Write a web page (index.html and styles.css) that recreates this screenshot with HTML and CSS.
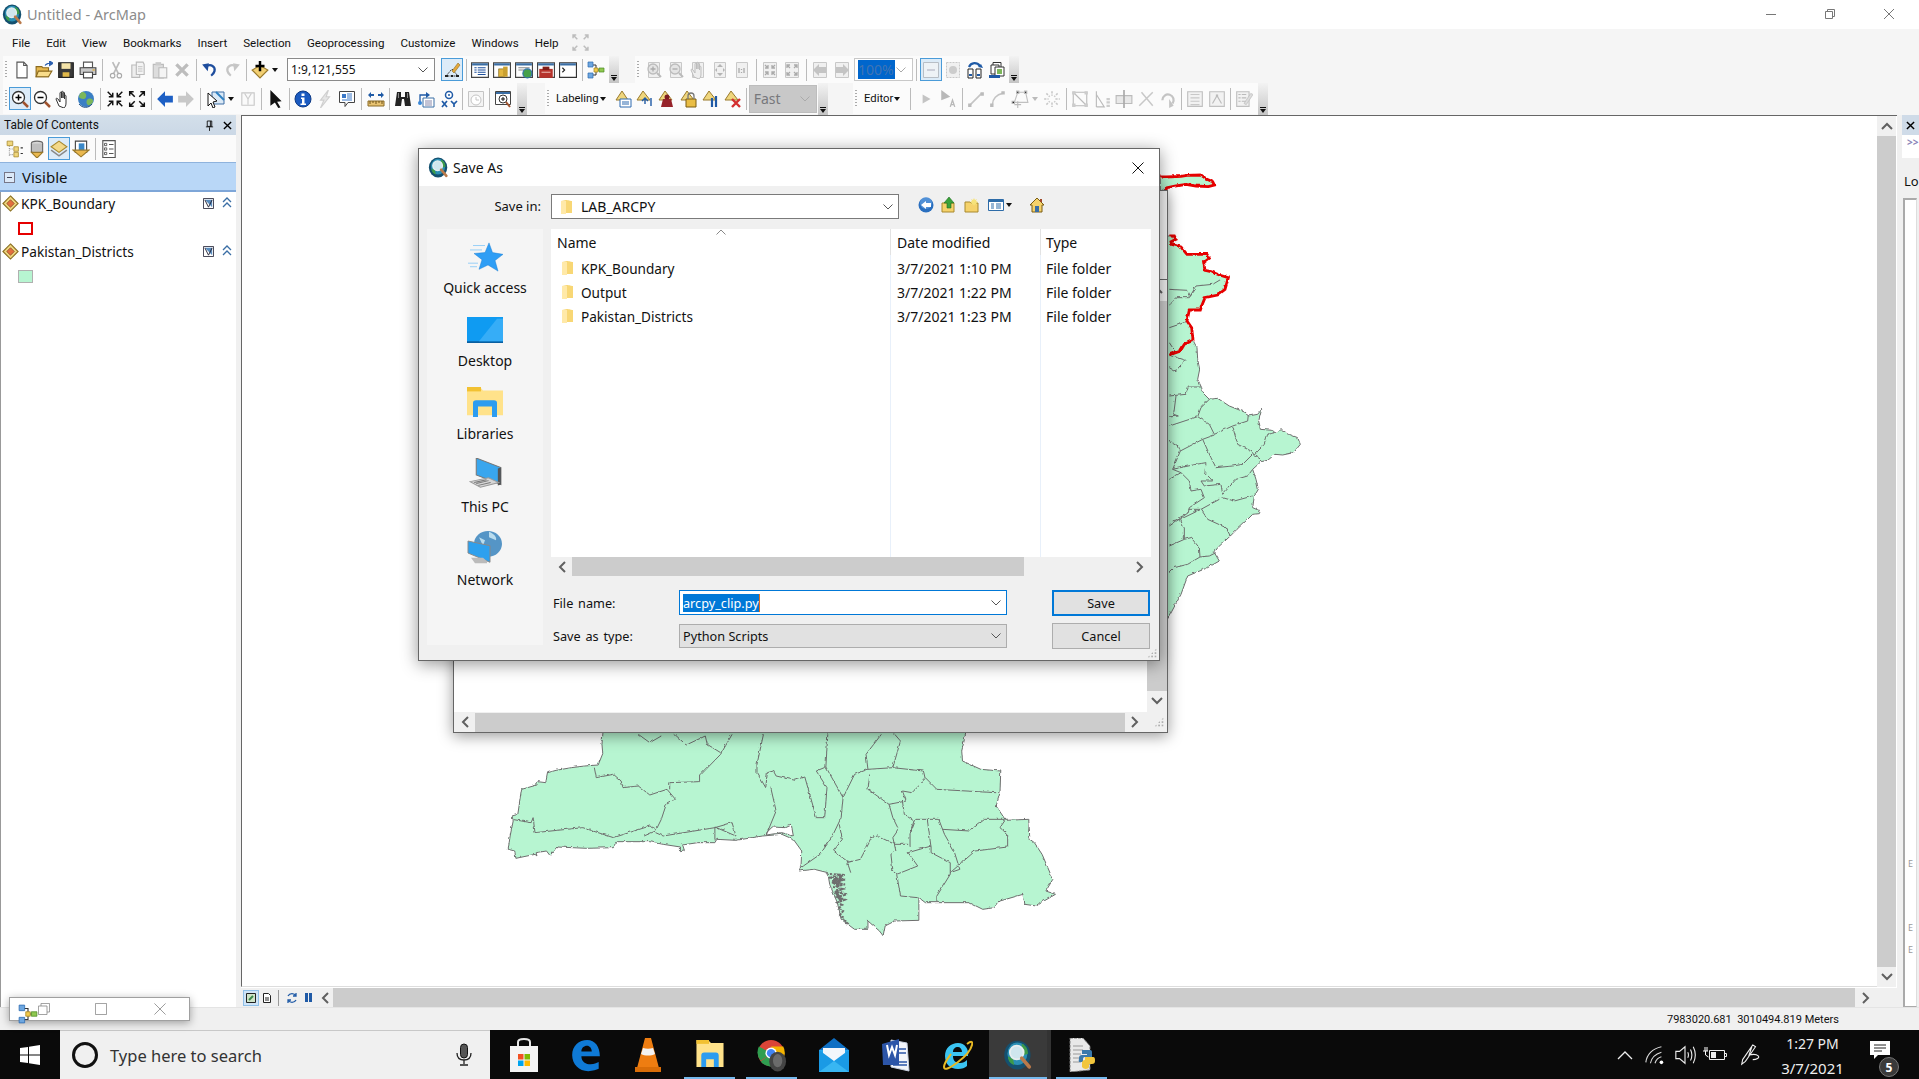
FILE: index.html
```html
<!DOCTYPE html>
<html lang="en">
<head>
<meta charset="utf-8">
<title>Untitled - ArcMap</title>
<link rel="stylesheet" href="styles.css">
</head>
<body>
<svg class="defs" aria-hidden="true">
<defs>
<filter id="jag" x="-5%" y="-5%" width="110%" height="110%"><feTurbulence type="turbulence" baseFrequency=".22" numOctaves="1" seed="4" result="n"/><feDisplacementMap in="SourceGraphic" in2="n" scale="2.500" xChannelSelector="R" yChannelSelector="G"/></filter>
<symbol id="arc" viewBox="0 0 24 24"><ellipse cx="11.500" cy="12" rx="10.500" ry="11.500" fill="#14506f"/><ellipse cx="11.500" cy="11" rx="8" ry="9" fill="#2a8fb5"/><path d="M15 3c3 1 5 4 5 8l-3 1-2-4zM4 13l4 2 1 5c-3-1-5-3-5-7z" fill="#3c9a4a"/><circle cx="11" cy="10" r="5.500" fill="#cfe6ee" stroke="#e7eef0" stroke-width="1.500"/><path d="M15 14.500l6 7" stroke="#b9794a" stroke-width="3" stroke-linecap="round"/></symbol>
<symbol id="new" viewBox="0 0 16 16"><path d="M3.500 1h6l3 3v11h-9z" fill="#fff" stroke="#555"/><path d="M9.500 1v3h3" fill="none" stroke="#555"/></symbol>
<symbol id="open" viewBox="0 0 16 16"><path d="M1 14V5h5l1 1h5v8z" fill="#e6b84f" stroke="#8b6a1e"/><path d="M1 14l2-5h12l-3 5z" fill="#f8dc8a" stroke="#8b6a1e"/><path d="M9 4c1-2 3-2 4-2M13 0v4l3-2z" stroke="#2a5fb0" fill="#2a5fb0"/></symbol>
<symbol id="save" viewBox="0 0 16 16"><path d="M1.500 1.500h13v13h-13z" fill="#3a3a3a" stroke="#222"/><path d="M4 2h8v5H4z" fill="#f4e3a8"/><path d="M5 10h6v4H5z" fill="#e0b84a"/></symbol>
<symbol id="print" viewBox="0 0 16 16"><path d="M4 1h8v5H4z" fill="#fff" stroke="#555"/><path d="M1 6h14v6H1z" fill="#c8c8c8" stroke="#444"/><path d="M4 10h8v5H4z" fill="#fff" stroke="#444"/><path d="M12 8h2" stroke="#d8a020"/></symbol>
<symbol id="cut" viewBox="0 0 16 16"><path d="M5 1l5 10M11 1L6 11" stroke="#bbb" stroke-width="1.500"/><circle cx="5" cy="13" r="2" fill="none" stroke="#aaa"/><circle cx="11" cy="13" r="2" fill="none" stroke="#aaa"/></symbol>
<symbol id="copy" viewBox="0 0 16 16"><path d="M2.500 3.500h7v11h-7z" fill="#eee" stroke="#bbb"/><path d="M6.500 1h6l1 2v9h-7z" fill="#f4f4f4" stroke="#bbb"/><path d="M8 5h4M8 7h4M8 9h4" stroke="#ccc"/></symbol>
<symbol id="paste" viewBox="0 0 16 16"><path d="M2 3h9v12H2z" fill="#ddd" stroke="#bbb"/><path d="M7 6h7v9H7z" fill="#f4f4f4" stroke="#bbb"/><path d="M4 1h5v3H4z" fill="#ccc"/></symbol>
<symbol id="del" viewBox="0 0 16 16"><path d="M3 3l10 10M13 3L3 13" stroke="#bdbdbd" stroke-width="3"/></symbol>
<symbol id="undo" viewBox="0 0 16 16"><path d="M4 5c5-3 9 0 8 4-.5 2-2 3-3 4" fill="none" stroke="#1f4e9e" stroke-width="2"/><path d="M1 3l6-1-1 7z" fill="#1f4e9e"/></symbol>
<symbol id="redo" viewBox="0 0 16 16"><path d="M12 5C7 2 3 5 4 9c.5 2 2 3 3 4" fill="none" stroke="#c6c6c6" stroke-width="2"/><path d="M15 3l-6-1 1 7z" fill="#c6c6c6"/></symbol>
<symbol id="add" viewBox="0 0 16 16"><path d="M8 4l7 4-7 7-7-7z" fill="#f2cf72" stroke="#9a7a2c"/><path d="M8 0v9M4 4.500h8" stroke="#000" stroke-width="2.200"/></symbol>
<symbol id="edit" viewBox="0 0 18 18"><path d="M3 15L9 8l6 7z" fill="none" stroke="#333" stroke-dasharray="2 1"/><path d="M2 14h3v2H2zM8 14h2v2H8zM13 14h3v2h-3z" fill="#222"/><path d="M9 10l6-8 2 2-6 8z" fill="#e5a93c" stroke="#8d6c22" stroke-width=".6"/></symbol>
<symbol id="win1" viewBox="0 0 16 16"><path d="M.5 1.500h15v13H.5z" fill="#fff" stroke="#444"/><path d="M1 2h14v2H1z" fill="#3a6ea5"/><path d="M3 6h2M3 8h2M3 10h2M6 6h7M6 8h7M6 10h7M6 12h7" stroke="#1e4f9b"/></symbol>
<symbol id="win2" viewBox="0 0 16 16"><path d="M.5 1.500h15v13H.5z" fill="#fff" stroke="#444"/><path d="M1 2h14v2H1z" fill="#3a6ea5"/><path d="M5 7h5v7H5z" fill="#e3b73f" stroke="#7f6520" stroke-width=".6"/><path d="M9 5h4v9H9z" fill="#caa030"/></symbol>
<symbol id="win3" viewBox="0 0 16 16"><path d="M.5 1.500h15v13H.5z" fill="#fff" stroke="#444"/><path d="M1 2h14v2H1z" fill="#3a6ea5"/><path d="M3 6h10M3 8h5" stroke="#888"/><circle cx="11" cy="11" r="4" fill="#46a04a" stroke="#2d6fa8"/></symbol>
<symbol id="win4" viewBox="0 0 16 16"><path d="M.5 1.500h15v13H.5z" fill="#fff" stroke="#444"/><path d="M1 2h14v2H1z" fill="#3a6ea5"/><path d="M2 7h12v8H2z" fill="#b6332c"/><path d="M5 5h6v3H5z" fill="#7f1d18"/><path d="M4 10h8" stroke="#e7b0a8"/></symbol>
<symbol id="win5" viewBox="0 0 16 16"><path d="M.5 1.500h15v13H.5z" fill="#fff" stroke="#333"/><path d="M1 2h14v2H1z" fill="#3a6ea5"/><path d="M3 6l2 2-2 2" fill="none" stroke="#222"/></symbol>
<symbol id="model" viewBox="0 0 18 18"><path d="M4 4h5v5M4 14h5V9h4" fill="none" stroke="#333"/><path d="M1 1h5v5H1zM1 12h5v5H1z" fill="#6ea7e0" stroke="#2d6bb0" stroke-width=".7"/><path d="M7 7h4v4H7z" fill="#f2c94c" stroke="#a8861d" stroke-width=".7"/><path d="M12 7h5v4h-5z" fill="#8fc84f" stroke="#4c8a22" stroke-width=".7"/></symbol>
<symbol id="zin" viewBox="0 0 18 18"><circle cx="7.500" cy="7.500" r="6" fill="#fff" stroke="#333" stroke-width="1.300"/><path d="M4.500 7.500h6M7.500 4.500v6" stroke="#000" stroke-width="1.500"/><path d="M12 12l5 5" stroke="#a0522d" stroke-width="2.500"/></symbol>
<symbol id="zout" viewBox="0 0 18 18"><circle cx="7.500" cy="7.500" r="6" fill="#fff" stroke="#333" stroke-width="1.300"/><path d="M4.500 7.500h6" stroke="#000" stroke-width="1.500"/><path d="M12 12l5 5" stroke="#a0522d" stroke-width="2.500"/></symbol>
<symbol id="hand" viewBox="0 0 18 18"><path d="M4 16L1 9c0-1 1-1 2 0l2 3V3c0-1 1.500-1 1.500 0v5-6c0-1 1.500-1 1.500 0v6-5c0-1 1.500-1 1.500 0v6-3c0-1 1.500-1 1.500 0v7c0 3-1 4-2 5z" fill="#fff" stroke="#333"/></symbol>
<symbol id="globe" viewBox="0 0 18 18"><circle cx="9" cy="9" r="8" fill="#3b7fc4"/><path d="M5 2c3 0 5 2 4 5S5 9 3 8 3 3 5 2zM11 9c3-1 5 0 5 2s-3 5-5 4-2-5 0-6z" fill="#7cb75a"/><path d="M2 14a8 8 0 0 0 13 0" fill="none" stroke="#204f86"/></symbol>
<symbol id="fin" viewBox="0 0 16 16"><path d="M1.500 1.500l4 4M6 2.500V6H2.500M14.500 1.500l-4 4M10 2.500V6h3.500M1.500 14.500l4-4M6 13.500V10H2.500M14.500 14.500l-4-4M10 13.500V10h3.500" fill="none" stroke="#111" stroke-width="1.300"/></symbol>
<symbol id="fout" viewBox="0 0 16 16"><path d="M6 6L2 2M1.500 5V1.500H5M10 6l4-4M14.500 5V1.500H11M6 10l-4 4M1.500 11v3.500H5M10 10l4 4M14.500 11v3.500H11" fill="none" stroke="#111" stroke-width="1.300"/></symbol>
<symbol id="back" viewBox="0 0 16 16"><path d="M1 8l7-7v4h7v6H8v4z" fill="#1d5fc4"/></symbol>
<symbol id="fwd" viewBox="0 0 16 16"><path d="M15 8L8 1v4H1v6h7v4z" fill="#c8c8c8"/></symbol>
<symbol id="selt" viewBox="0 0 18 18"><path d="M5 2h12v12H5z" fill="#dbe9f6" stroke="#3f6fa5"/><path d="M9 2l8 8" stroke="#2f80c2" stroke-width="2"/><path d="M1 3l9 8-4 1 2 5-2 1-2-5-3 3z" fill="#fff" stroke="#111"/></symbol>
<symbol id="clr" viewBox="0 0 16 16"><path d="M2.500 2.500h11v11h-11z" fill="#fafafa" stroke="#c8c8c8"/><path d="M5 3l3 5 3-5M8 8v5" fill="none" stroke="#ccc"/></symbol>
<symbol id="ptr" viewBox="0 0 16 16"><path d="M3 0l10 10-4 .5 3 5-2 .5-3-5-4 3z" fill="#111"/></symbol>
<symbol id="info" viewBox="0 0 18 18"><circle cx="9" cy="9" r="8" fill="#1a5ac0" stroke="#0e3a85"/><path d="M7.500 3.500h3v2.500h-3zM7 7.500h3.500v6H12V15H6.500v-1.500H8V9H7z" fill="#fff"/></symbol>
<symbol id="bolt" viewBox="0 0 16 16"><path d="M11 0L4 9h3l-3 7 8-10H9z" fill="#e6e6e6" stroke="#cfcfcf"/></symbol>
<symbol id="html" viewBox="0 0 18 18"><path d="M1.500 1.500h15v11H10l-3 4v-4H1.500z" fill="#fff" stroke="#444"/><path d="M4 4h4v4H4z" fill="#3a78c8"/><path d="M9 4h5M9 6h5M9 8h5M4 10h10" stroke="#3a78c8"/></symbol>
<symbol id="meas" viewBox="0 0 18 18"><path d="M1 11h16v5H1z" fill="#e7c271" stroke="#8a6a26"/><path d="M3 11v3M6 11v2M9 11v3M12 11v2M15 11v3" stroke="#6e521a"/><path d="M1 5l3-3v2h3v2H4v2zM17 5l-3-3v2h-3v2h3v2z" fill="#1f5aa6"/></symbol>
<symbol id="bino" viewBox="0 0 18 18"><path d="M3 2h4v5h4V2h4l2 14h-6l-1-7H8L7 16H1z" fill="#222"/><path d="M4 3h1v5H4zM13 3h1v5h-1z" fill="#888"/></symbol>
<symbol id="route" viewBox="0 0 18 18"><path d="M6 8h11v9H6z" fill="#fff" stroke="#3a6ea5"/><path d="M8 11h7M8 13h7M8 15h7" stroke="#88a"/><path d="M3 12V5h7" fill="none" stroke="#1f5aa6" stroke-width="1.300"/><path d="M9 2l4 3-4 3z" fill="#1f5aa6"/><circle cx="3" cy="13" r="2" fill="#3a88d8"/></symbol>
<symbol id="xy" viewBox="0 0 18 18"><circle cx="9" cy="5" r="3.500" fill="#fff" stroke="#1f5aa6" stroke-width="1.500"/><circle cx="9" cy="5" r="1" fill="#1f5aa6"/><path d="M2 11l5 6M7 11l-5 6M11 11l3 3 3-3M14 14v3" fill="none" stroke="#1f5aa6" stroke-width="1.700"/></symbol>
<symbol id="time" viewBox="0 0 18 18"><path d="M1.500 1.500h15v15h-15z" fill="#f4f4f4" stroke="#c4c4c4"/><circle cx="9" cy="10" r="5" fill="#fff" stroke="#c4c4c4"/><path d="M9 7v3h3" fill="none" stroke="#c4c4c4"/></symbol>
<symbol id="mag" viewBox="0 0 18 18"><path d="M1.500 1.500h15v13h-15z" fill="#fff" stroke="#444"/><path d="M2 2h14v2H2z" fill="#3a6ea5"/><circle cx="9" cy="9" r="4" fill="#fff" stroke="#333"/><path d="M7 9h4M9 7v4" stroke="#111"/><path d="M12 12l4 5" stroke="#a0522d" stroke-width="2"/></symbol>
<symbol id="lab" viewBox="0 0 18 18"><path d="M8 1l6 9H2z" fill="#efd67d" stroke="#9a7a2c"/><path d="M6 9h11v8H6z" fill="#fff" stroke="#2f6ab0"/><path d="M8 12h7M8 14h7" stroke="#2f6ab0"/></symbol>
<symbol id="lab2" viewBox="0 0 18 18"><path d="M7 1l7 9H1z" fill="#efd67d" stroke="#9a7a2c"/><path d="M9 14V8m-3 3l3-3 3 3M15 8v8" fill="none" stroke="#1f5aa6" stroke-width="1.400"/></symbol>
<symbol id="lab3" viewBox="0 0 18 18"><path d="M7 1l7 9H1z" fill="#efd67d" stroke="#9a7a2c"/><path d="M5 9h8l2 8H3z" fill="#96232a"/><circle cx="9" cy="7" r="2.500" fill="#7e1b21"/></symbol>
<symbol id="lab4" viewBox="0 0 18 18"><path d="M7 1l7 9H1z" fill="#efd67d" stroke="#9a7a2c"/><path d="M6 9h10v8H6z" fill="#e9bd45" stroke="#7a5d12"/><path d="M8 9V6a3 3 0 0 1 6 0v3" fill="none" stroke="#777" stroke-width="1.300"/></symbol>
<symbol id="lab5" viewBox="0 0 18 18"><path d="M7 1l7 9H1z" fill="#efd67d" stroke="#9a7a2c"/><path d="M10 8v9M14 6v11" stroke="#1f5aa6" stroke-width="2.200"/></symbol>
<symbol id="lab6" viewBox="0 0 18 18"><path d="M7 1l7 9H1z" fill="#efd67d" stroke="#9a7a2c"/><path d="M8 9l8 8M16 9l-8 8" stroke="#d32f2f" stroke-width="2.400"/></symbol>
<symbol id="dz" viewBox="0 0 18 18"><path d="M3.500 1.500h11v15h-11z" fill="#f0f0f0" stroke="#c8c8c8"/><circle cx="8" cy="8" r="5" fill="#e4e4e4" stroke="#bcbcbc" stroke-width="1.300"/><path d="M5.500 8h5M8 5.500v5" stroke="#aaa" stroke-width="1.300"/><path d="M12 12l4 4" stroke="#bbb" stroke-width="2"/></symbol>
<symbol id="dzo" viewBox="0 0 18 18"><path d="M3.500 1.500h11v15h-11z" fill="#f0f0f0" stroke="#c8c8c8"/><circle cx="8" cy="8" r="5" fill="#e4e4e4" stroke="#bcbcbc" stroke-width="1.300"/><path d="M5.500 8h5" stroke="#aaa" stroke-width="1.300"/><path d="M12 12l4 4" stroke="#bbb" stroke-width="2"/></symbol>
<symbol id="dh" viewBox="0 0 18 18"><path d="M3.500 1.500h11v15h-11z" fill="#f0f0f0" stroke="#c8c8c8"/><path d="M5 16L2 9c0-1 1-1 2 0l2 3V3c0-1 1.500-1 1.500 0v5-6c0-1 1.500-1 1.500 0v6-5c0-1 1.500-1 1.500 0v6-3c0-1 1.500-1 1.500 0v7c0 3-1 4-2 5z" fill="#eee" stroke="#bdbdbd"/></symbol>
<symbol id="dfit" viewBox="0 0 18 18"><path d="M3.500 1.500h11v15h-11z" fill="#f0f0f0" stroke="#c8c8c8"/><path d="M9 3l3 3H6zM9 15l-3-3h6zM4 9l2-2v4zM14 9l-2-2v4z" fill="#b4b4b4"/></symbol>
<symbol id="d11" viewBox="0 0 18 18"><path d="M3.500 1.500h11v15h-11z" fill="#f0f0f0" stroke="#c8c8c8"/><path d="M6 7v5M8.500 8v1M8.500 11v1M11 7v5" stroke="#aaa" stroke-width="1.300"/></symbol>
<symbol id="dfi" viewBox="0 0 18 18"><path d="M2.500 1.500h13v15h-13z" fill="#f0f0f0" stroke="#c8c8c8"/><path d="M4 4l3 3M7 4v3H4M14 4l-3 3M11 4v3h3M4 14l3-3M7 14v-3H4M14 14l-3-3M11 14v-3h3" fill="none" stroke="#aaa" stroke-width="1.300"/></symbol>
<symbol id="dfo" viewBox="0 0 18 18"><path d="M2.500 1.500h13v15h-13z" fill="#f0f0f0" stroke="#c8c8c8"/><path d="M7 7L4 4M4 7V4h3M11 7l3-3M14 7V4h-3M7 11l-3 3M4 11v3h3M11 11l3 3M14 11v3h-3" fill="none" stroke="#aaa" stroke-width="1.300"/></symbol>
<symbol id="dbk" viewBox="0 0 18 18"><path d="M2.500 1.500h13v15h-13z" fill="#f0f0f0" stroke="#c8c8c8"/><path d="M2 9l6-6v3h7v6H8v3z" fill="#c4c4c4"/></symbol>
<symbol id="dfw" viewBox="0 0 18 18"><path d="M2.500 1.500h13v15h-13z" fill="#f0f0f0" stroke="#c8c8c8"/><path d="M16 9l-6-6v3H3v6h7v3z" fill="#c4c4c4"/></symbol>
<symbol id="pgv" viewBox="0 0 18 18"><path d="M1.500 1.500h15v15h-15z" fill="#eef2f6" stroke="#b8bec6"/><path d="M5 9h8" stroke="#aab"/></symbol>
<symbol id="pgd" viewBox="0 0 18 18"><path d="M2.500 1.500h13v15h-13z" fill="#f0f0f0" stroke="#c8c8c8" stroke-dasharray="2 1"/><circle cx="9" cy="9" r="4" fill="#ccc"/></symbol>
<symbol id="chg" viewBox="0 0 18 18"><path d="M2 8h5v9H2zM10 8h5v9h-5z" fill="#fff" stroke="#222"/><path d="M3 14h3M11 14h3" stroke="#1f5aa6" stroke-width="2"/><path d="M3 6c2-5 8-5 11-1" fill="none" stroke="#1f5aa6" stroke-width="2.200"/><path d="M17 7l-5-1 3-3z" fill="#1f5aa6"/></symbol>
<symbol id="lay" viewBox="0 0 18 18"><path d="M5 1.500h8v9H5z" fill="#fff" stroke="#333"/><path d="M3 4h8v9H3z" fill="#fff" stroke="#333"/><path d="M7 6h9v9H7z" fill="#fff" stroke="#333"/><path d="M9 8h5v5H9z" fill="#7cb75a"/><path d="M1 14h11v3H1z" fill="#1f5aa6"/></symbol>
<symbol id="e1" viewBox="0 0 16 16"><path d="M5 4l7 4-7 4z" fill="#c4c4c4"/></symbol>
<symbol id="e2" viewBox="0 0 16 16"><path d="M2 0l8 6-8 3z" fill="#b8b8b8"/><path d="M10 15l2-6 2 6M11 13h2" fill="none" stroke="#b8b8b8" stroke-width="1.200"/></symbol>
<symbol id="e3" viewBox="0 0 16 16"><path d="M3 13L13 3" stroke="#c4c4c4" stroke-width="1.400"/><path d="M1 12h3v3H1zM12 2h3v3h-3z" fill="#bbb"/></symbol>
<symbol id="e4" viewBox="0 0 16 16"><path d="M3 13c0-5 4-9 9-10" fill="none" stroke="#c4c4c4" stroke-width="1.400"/><path d="M1 12h3v3H1zM11 1h3v3h-3z" fill="#bbb"/></symbol>
<symbol id="e5" viewBox="0 0 16 16"><path d="M3 11L6 2h7l2 9z" fill="none" stroke="#c0c0c0"/><path d="M5 1h2v2H5zM12 1h2v2h-2zM1 10h2v2H1zM6 10v6M3 13h6" stroke="#bbb"/></symbol>
<symbol id="e6" viewBox="0 0 16 16"><path d="M8 1v4M8 11v4M1 8h4M11 8h4M3 3l3 3M13 3l-3 3M3 13l3-3M13 13l-3-3" stroke="#c8c8c8" stroke-width="1.400" stroke-dasharray="2 1"/></symbol>
<symbol id="e7" viewBox="0 0 16 16"><path d="M2 2h12v12H2zM2 2l12 12" fill="none" stroke="#bbb"/><path d="M1 1h3v3H1zM12 1h3v3h-3zM1 12h3v3H1zM12 12h3v3h-3z" fill="#ccc"/></symbol>
<symbol id="e8" viewBox="0 0 16 16"><path d="M3 1v14M3 4l7 11H3" fill="none" stroke="#bbb"/><path d="M12 8h3M12 11h3M12 14h3" stroke="#ccc" stroke-width="2"/></symbol>
<symbol id="e9" viewBox="0 0 16 16"><path d="M1 5h14v7H1z" fill="#e8e8e8" stroke="#bbb"/><path d="M8 0v16" stroke="#aaa" stroke-width="1.500"/></symbol>
<symbol id="e10" viewBox="0 0 16 16"><path d="M2 14L14 2M4 2l10 12" stroke="#c8c8c8" stroke-width="1.300"/></symbol>
<symbol id="e11" viewBox="0 0 16 16"><path d="M3 9a5 5 0 1 1 9 3" fill="none" stroke="#c4c4c4" stroke-width="2"/><path d="M9 8v8l4-2z" fill="#c4c4c4"/></symbol>
<symbol id="e12" viewBox="0 0 16 16"><path d="M1.500 1.500h13v13h-13z" fill="#f2f2f2" stroke="#c0c0c0"/><path d="M4 4h8M4 7h8M4 10h8M4 13h8" stroke="#c8c8c8"/></symbol>
<symbol id="e13" viewBox="0 0 16 16"><path d="M1.500 1.500h13v13h-13z" fill="#f2f2f2" stroke="#c0c0c0"/><path d="M4 12l4-7 4 7" fill="none" stroke="#bbb"/><path d="M7 4h2v2H7z" fill="#bbb"/></symbol>
<symbol id="e14" viewBox="0 0 16 16"><path d="M1.500 1.500h11v13h-11z" fill="#f2f2f2" stroke="#c0c0c0"/><path d="M3 4h2M3 7h2M3 10h2M6 4h4M6 7h4M6 10h4" stroke="#bbb"/><path d="M8 12l6-9 2 1-6 9z" fill="#ddd" stroke="#bbb" stroke-width=".6"/></symbol>
<symbol id="tc1" viewBox="0 0 16 16"><path d="M3 3v11M3 8h8M3 13h8" stroke="#999" stroke-dasharray="1 1"/><path d="M1 1h5v4H1zM7 6h4v4H7zM7 11h4v4H7z" fill="#efd67d" stroke="#a88a2e" stroke-width=".7"/><path d="M13 7h2M13 12h2" stroke="#333"/></symbol>
<symbol id="tc2" viewBox="0 0 16 16"><ellipse cx="8" cy="3" rx="5" ry="2" fill="#d8d8d8" stroke="#666"/><path d="M3 3v7c0 2 10 2 10 0V3" fill="#bfbfbf" stroke="#666"/><path d="M3 11h10l-5 5z" fill="#eab84f" stroke="#9a7a2c"/></symbol>
<symbol id="tc3" viewBox="0 0 16 16"><path d="M8 1l7 5-7 5-7-5z" fill="#f3d98a" stroke="#a8892e"/><path d="M1 9l7 5 7-5" fill="none" stroke="#888" stroke-width="1.300"/></symbol>
<symbol id="tc4" viewBox="0 0 16 16"><path d="M3 1h10v10H3z" fill="#fff" stroke="#444"/><path d="M6 3h5v6H6z" fill="#3a88c8"/><path d="M1 9h14l-7 6z" fill="#eab84f" stroke="#9a7a2c"/></symbol>
<symbol id="tc5" viewBox="0 0 16 16"><path d="M2.500.5h11v15h-11z" fill="#fff" stroke="#555"/><path d="M4 3h2v2H4zM4 7h2v2H4zM4 11h2v2H4z" fill="none" stroke="#555" stroke-width=".8"/><path d="M8 4h4M8 8h4M8 12h4" stroke="#555"/></symbol>
<symbol id="lyr" viewBox="0 0 18 18"><path d="M9 1l8 8-8 8-8-8z" fill="#efd67d" stroke="#8a6f22" stroke-width="1.200"/><path d="M9 5l4 4-4 4-4-4z" fill="#e3703e" stroke="#7a3d24" stroke-width=".7"/></symbol>
<symbol id="chk" viewBox="0 0 12 12"><path d="M.5.500h11v11H.5z" fill="#fff" stroke="#334"/><path d="M2 2l8 8V2z" fill="#5a8dbf"/><path d="M2 2l4 8 4-8" fill="none" stroke="#223"/></symbol>
<symbol id="upc" viewBox="0 0 10 12"><path d="M1 5l4-4 4 4M1 10l4-4 4 4" fill="none" stroke="#3a6ea5" stroke-width="1.300"/></symbol>
<symbol id="fold" viewBox="0 0 14 16"><path d="M1 2l5-1c2 0 5 1 5 1v12H2l-1 1z" fill="#f8d775"/><path d="M1 2h5v13H1z" fill="#ffe9a8"/><path d="M6 2h6v12H6z" fill="#f8d775"/></symbol>
<symbol id="star" viewBox="0 0 36 34" preserveAspectRatio="none"><path d="M22 1l3.500 11L36 14l-8 7 3 12-10-7-9 5 3-11-8-7 11-1z" fill="#2f9ef5" stroke="#1a7fd4" stroke-width=".5"/><path d="M6 4h12M3 9h12M1 24h10M3 28h7" stroke="#93cdf6"/></symbol>
<symbol id="desk" viewBox="0 0 36 28" preserveAspectRatio="none"><path d="M0 0h36v28H0z" fill="#0f9bf2"/><path d="M0 26h36v2H0z" fill="#0a5fa0"/><path d="M12 26L30 2h6v24z" fill="#36adf7"/></symbol>
<symbol id="libs" viewBox="0 0 36 34" preserveAspectRatio="none"><path d="M0 0h13l3 4h20v28H0z" fill="#ffe28a"/><path d="M0 0h14v5H0z" fill="#f2c132"/><path d="M6 34V18c0-2 1-3 3-3h18c2 0 3 1 3 3v16h-5V22H11v12z" fill="#2c9cf0"/></symbol>
<symbol id="pc" viewBox="0 0 36 36" preserveAspectRatio="none"><path d="M9 0l24 10v18L9 18z" fill="#39a6ee" stroke="#777"/><path d="M30 11l3-1v18l-3 1z" fill="#555"/><path d="M3 25l18-4 10 5-18 5z" fill="#d6d6d6" stroke="#999"/><path d="M7 26l12-3M9 27l12-3M11 29l12-3" stroke="#777"/></symbol>
<symbol id="net" viewBox="0 0 36 38" preserveAspectRatio="none"><circle cx="21" cy="15" r="14" fill="#5595c6"/><path d="M22 2c5 2 8 6 7 9l-7-3zM12 8l6 3-2 6z" fill="#b9dcee"/><path d="M1 12l22 5v18L1 25z" fill="#2da0ee" stroke="#888"/><path d="M4 30h12l4 4v2H8z" fill="#bbb"/></symbol>
<symbol id="backb" viewBox="0 0 16 16"><circle cx="8" cy="8" r="7.500" fill="#2a6fbf"/><circle cx="8" cy="6" r="6" fill="#6da6e6" opacity=".6"/><path d="M3 8l5-4v2h5v4H8v2z" fill="#fff"/></symbol>
<symbol id="upb" viewBox="0 0 16 16"><path d="M1 15V6h12v9z" fill="#f5d26b" stroke="#a8892e"/><path d="M6 11V6H3l5-6 5 6h-3v5z" fill="#3aa23a" stroke="#1f6d1f" stroke-width=".6"/></symbol>
<symbol id="newb" viewBox="0 0 16 16"><path d="M1 15V5h5l1 1h7v9z" fill="#f5d26b" stroke="#a8892e"/><path d="M10 1l1 2 2-1-1 2 2 1-2 1 1 2-2-1-1 2-1-2-2 1 1-2-2-1 2-1-1-2 2 1z" fill="#f6e27a"/></symbol>
<symbol id="viewb" viewBox="0 0 16 16"><path d="M.5 2.500h15v11H.5z" fill="#fff" stroke="#2e6ca8"/><path d="M1 3h14v2H1z" fill="#2e6ca8"/><path d="M3 7h3M3 9h3M3 11h3M8 7h5M8 9h5M8 11h5" stroke="#2e6ca8"/></symbol>
<symbol id="home" viewBox="0 0 16 16"><path d="M8 1L1 8h2v7h10V8h2z" fill="#f5d26b" stroke="#7a5d12"/><path d="M6 9h4v6H6z" fill="#3a6ea5"/><path d="M11 2h2v3h-2z" fill="#a14a2a"/></symbol>
<symbol id="win" viewBox="0 0 20 20"><path d="M0 3l8-1v7.500H0zM9 1.800L20 0v9.500H9zM0 10.500h8V18l-8-1zM9 10.500h11V20L9 18.200z" fill="#fff"/></symbol>
<symbol id="mic" viewBox="0 0 16 24"><rect x="4.500" y="1" width="7" height="14" rx="3.500" fill="#555" stroke="#111"/><path d="M1 10c0 5 3 7 7 7s7-2 7-7M8 17v4M4 22h8" fill="none" stroke="#222" stroke-width="1.300"/></symbol>
<symbol id="store" viewBox="0 0 30 34"><path d="M1 8h28v26H1z" fill="#f4f4f4"/><path d="M9 8V4c0-4 12-4 12 0v4" fill="none" stroke="#e8e8e8" stroke-width="2"/><path d="M9 16h5.500v5.500H9z" fill="#f25022"/><path d="M15.500 16H21v5.500h-5.500z" fill="#7fba00"/><path d="M9 22.500h5.500V28H9z" fill="#00a4ef"/><path d="M15.500 22.500H21V28h-5.500z" fill="#ffb900"/></symbol>
<symbol id="edge" viewBox="0 0 26 28"><path d="M1 14C1 6 7 1 14 1c7 0 11 6 11 14H9c0 5 4 7 8 7 3 0 5-1 7-2v6c-2 1-5 2-9 2C7 28 1 22 1 14zM9 11h9c0-3-2-5-4-5-3 0-5 2-5 5z" fill="#0f7ad6" fill-rule="evenodd"/></symbol>
<symbol id="vlc" viewBox="0 0 26 34"><path d="M10 0h6l8 30H2z" fill="#ee7d11"/><path d="M8 10c3 1 7 1 10 0l2 6c-4 2-10 2-14 0z" fill="#f2f2f2"/><path d="M0 29h26v5H0z" fill="#d96d08"/></symbol>
<symbol id="exp" viewBox="0 0 28 30"><path d="M0 0h12l3 3h13v25H0z" fill="#ffe28a"/><path d="M0 0h13v4H0z" fill="#f2c132"/><path d="M5 28V16c0-2 1-3 3-3h12c2 0 3 1 3 3v12h-5v-8h-8v8z" fill="#2c9cf0"/></symbol>
<symbol id="chr" viewBox="0 0 32 36"><circle cx="15" cy="16" r="14" fill="#db4437"/><path d="M15 16L4 24a14 14 0 0 1-2-15z" fill="#2f9e4f"/><path d="M15 16L4 25a14 14 0 0 0 20 2z" fill="#2f9e4f"/><path d="M15 9h13a14 14 0 0 1-3 17z" fill="#f4b400"/><circle cx="15" cy="16" r="6" fill="#fff"/><circle cx="15" cy="16" r="4.500" fill="#4285f4"/><ellipse cx="22" cy="25" rx="9" ry="10.500" fill="#444"/><ellipse cx="22" cy="24" rx="5" ry="7" fill="#6b6b6b"/></symbol>
<symbol id="mail" viewBox="0 0 30 34"><path d="M0 12L15 0l15 12z" fill="#0e6fc4"/><path d="M0 12h30v22H0z" fill="#27a6ec"/><path d="M4 10h22v7l-11 7-11-7z" fill="#f2f6fb"/><path d="M0 12l15 11 15-11v22H0z" fill="#1a9ae5"/><path d="M0 34l15-11 15 11z" fill="#38b6f2"/></symbol>
<symbol id="word" viewBox="0 0 30 34"><path d="M10 2l16 3 2 28-18-4z" fill="#f3f5fa" stroke="#c6cede"/><path d="M1 6l17-5v26L2 27z" fill="#2c55a8"/><path d="M11 11h14M11 15h14M12 24h14M12 27h14" stroke="#2c55a8" stroke-width="1.500"/><path d="M6 7l2 10 3-8 3 8 2-10" fill="none" stroke="#fff" stroke-width="2"/></symbol>
<symbol id="ie" viewBox="0 0 30 34"><path d="M2 18c0-8 6-13 13-13 7 0 11 6 10 13H10c0 5 3 7 7 7 3 0 5-1 7-3v6c-2 2-5 3-9 3C7 31 2 26 2 18zM10 14h9c0-3-2-5-4-5-3 0-5 2-5 5z" fill="#3bc4f2" fill-rule="evenodd"/><path d="M24 6c4-3 6-3 5 1s-6 11-14 17S1 33 1 29s4-9 7-13" fill="none" stroke="#e8b923" stroke-width="2"/></symbol>
<symbol id="py" viewBox="0 0 28 34"><path d="M2 0h13l7 8v24l-20 2z" fill="#e9e9e9" stroke="#777" stroke-dasharray="3 1"/><path d="M5 8h10M5 12h10M5 16h8M5 20h8M5 24h8" stroke="#999"/><path d="M14 12h8c2 0 2 2 2 2v5h-7c-2 0-2 2-2 2v3h-3c-2 0-1-2-1-4s1-3 3-3h5v-1h-5z" fill="#3a79ac"/><path d="M17 19h8c2 0 2 2 2 4s-1 3-3 3h-3v3c0 2-5 3-7 0v-4c0-2 1-3 3-3z" fill="#f2c63c"/></symbol>
<symbol id="wifi" viewBox="0 0 24 24"><path d="M2 20C3 12 9 5 19 3M7 21c1-5 5-10 12-12M12 21c1-3 3-6 7-7" fill="none" stroke="#ddd" stroke-width="1.200"/><circle cx="19" cy="20" r="2" fill="#fff"/></symbol>
<symbol id="vol" viewBox="0 0 24 24"><path d="M2 8h4l6-5v18l-6-5H2z" fill="none" stroke="#eee" stroke-width="1.200"/><path d="M15 9c1 2 1 4 0 6M18 6c2 4 2 8 0 12M21 3c3 6 3 12 0 18" fill="none" stroke="#eee" stroke-width="1.200"/></symbol>
<symbol id="bat" viewBox="0 0 24 16"><path d="M6.500 3.500h15v9h-15zM21.500 6.500h2v3h-2z" fill="none" stroke="#eee"/><path d="M8 5h5v6H8z" fill="#eee"/><path d="M0 4h5M2 0v4M4 0v4M2.500 4v4l3 2" fill="none" stroke="#fff"/></symbol>
<symbol id="pen" viewBox="0 0 24 24"><path d="M15 1l3 2L7 19l-4 3 1-5zM14 3l-3 9c4-1 8-1 10 1s-2 4-6 4" fill="none" stroke="#eee" stroke-width="1.200"/></symbol>
</defs>
</svg>

<div class="app">
  <header class="titlebar">
    <svg class="arc-small"><use href="#arc"/></svg>
    <span class="title-text">Untitled - ArcMap</span>
    <div class="winbtns">
      <svg class="wb" viewBox="0 0 12 12"><path d="M1 6.500h10"/></svg>
      <svg class="wb" viewBox="0 0 12 12"><path d="M1.500 3.500h7v7h-7zM3.500 3.500v-2h7v7h-2"/></svg>
      <svg class="wb" viewBox="0 0 12 12"><path d="M1 1l10 10M11 1L1 11"/></svg>
    </div>
  </header>

  <nav class="menubar">
    <span class="mi">File</span><span class="mi">Edit</span><span class="mi">View</span><span class="mi">Bookmarks</span><span class="mi">Insert</span><span class="mi">Selection</span><span class="mi">Geoprocessing</span><span class="mi">Customize</span><span class="mi">Windows</span><span class="mi">Help</span>
    <svg class="expand" viewBox="0 0 16 16"><path d="M1 1l4 4M1 4V1h3M15 1l-4 4M15 4V1h-3M1 15l4-4M1 12v3h3M15 15l-4-4M15 12v3h-3"/></svg>
  </nav>

  <div class="tbrow">
    <div class="tb t-a"><span class="grip"></span>
      <span class="i"><svg><use href="#new"/></svg></span><span class="i"><svg><use href="#open"/></svg></span><span class="i"><svg><use href="#save"/></svg></span><span class="i"><svg><use href="#print"/></svg></span><span class="s"></span>
      <span class="i"><svg><use href="#cut"/></svg></span><span class="i"><svg><use href="#copy"/></svg></span><span class="i"><svg><use href="#paste"/></svg></span><span class="i"><svg><use href="#del"/></svg></span><span class="s"></span>
      <span class="i"><svg><use href="#undo"/></svg></span><span class="i"><svg><use href="#redo"/></svg></span><span class="s"></span>
      <span class="i"><svg><use href="#add"/></svg></span><span class="c"></span>
      <span class="combo c-scale">1:9,121,555<svg class="chev" viewBox="0 0 10 6"><path d="M.5.500L5 5l4.500-4.500"/></svg></span>
      <span class="i on"><svg><use href="#edit"/></svg></span><span class="s"></span>
      <span class="i"><svg><use href="#win1"/></svg></span><span class="i"><svg><use href="#win2"/></svg></span><span class="i"><svg><use href="#win3"/></svg></span><span class="i"><svg><use href="#win4"/></svg></span><span class="i"><svg><use href="#win5"/></svg></span><span class="s"></span>
      <span class="i"><svg><use href="#model"/></svg></span>
    </div><span class="endgrip"></span>
    <div class="tb t-b"><span class="grip"></span>
      <span class="i"><svg><use href="#dz"/></svg></span><span class="i"><svg><use href="#dzo"/></svg></span><span class="i"><svg><use href="#dh"/></svg></span><span class="i"><svg><use href="#dfit"/></svg></span><span class="i"><svg><use href="#d11"/></svg></span><span class="s"></span>
      <span class="i"><svg><use href="#dfi"/></svg></span><span class="i"><svg><use href="#dfo"/></svg></span><span class="s"></span>
      <span class="i"><svg><use href="#dbk"/></svg></span><span class="i"><svg><use href="#dfw"/></svg></span>
      <span class="combo c-zoom"><span class="sel-dim">100%</span><svg class="chev dim" viewBox="0 0 10 6"><path d="M.5.500L5 5l4.500-4.500"/></svg></span><span class="s s-7"></span>
      <span class="i on"><svg><use href="#pgv"/></svg></span><span class="i"><svg><use href="#pgd"/></svg></span><span class="i"><svg><use href="#chg"/></svg></span><span class="i"><svg><use href="#lay"/></svg></span>
    </div><span class="endgrip"></span>
  </div>

  <div class="tbrow r2">
    <div class="tb t-c"><span class="grip g-n"></span>
      <span class="i on"><svg><use href="#zin"/></svg></span><span class="i"><svg><use href="#zout"/></svg></span><span class="i"><svg><use href="#hand"/></svg></span><span class="i"><svg><use href="#globe"/></svg></span><span class="s s-7"></span>
      <span class="i"><svg><use href="#fin"/></svg></span><span class="i"><svg><use href="#fout"/></svg></span><span class="s"></span>
      <span class="i"><svg><use href="#back"/></svg></span><span class="i i-n"><svg><use href="#fwd"/></svg></span><span class="s s-9"></span>
      <span class="i"><svg><use href="#selt"/></svg></span><span class="c c-11"></span><span class="i i-n"><svg><use href="#clr"/></svg></span><span class="s s-7"></span>
      <span class="i"><svg><use href="#ptr"/></svg></span><span class="s s-n"></span>
      <span class="i"><svg><use href="#info"/></svg></span><span class="i"><svg><use href="#bolt"/></svg></span><span class="i"><svg><use href="#html"/></svg></span><span class="s s-7"></span>
      <span class="i"><svg><use href="#meas"/></svg></span><span class="s s-n"></span>
      <span class="i"><svg><use href="#bino"/></svg></span><span class="i i-w"><svg><use href="#route"/></svg></span><span class="i"><svg><use href="#xy"/></svg></span><span class="s s-n"></span>
      <span class="i"><svg><use href="#time"/></svg></span><span class="s s-n"></span>
      <span class="i"><svg><use href="#mag"/></svg></span>
    </div><span class="endgrip"></span>
    <div class="tb t-d"><span class="grip"></span>
      <span class="tb-text">Labeling</span><span class="c"></span>
      <span class="i"><svg><use href="#lab"/></svg></span><span class="i"><svg><use href="#lab2"/></svg></span><span class="i"><svg><use href="#lab3"/></svg></span><span class="i"><svg><use href="#lab4"/></svg></span><span class="i"><svg><use href="#lab5"/></svg></span><span class="i"><svg><use href="#lab6"/></svg></span><span class="s s-n"></span>
      <span class="combo c-fast">Fast<svg class="chev dim" viewBox="0 0 10 6"><path d="M.5.500L5 5l4.500-4.500"/></svg></span>
    </div><span class="endgrip"></span>
    <div class="tb t-e"><span class="grip"></span>
      <span class="tb-text">Editor</span><span class="c"></span><span class="s s-9"></span>
      <span class="i"><svg><use href="#e1"/></svg></span><span class="i"><svg><use href="#e2"/></svg></span><span class="s"></span>
      <span class="i"><svg><use href="#e3"/></svg></span><span class="i"><svg><use href="#e4"/></svg></span><span class="i"><svg><use href="#e5"/></svg></span><span class="c c-dim c-10"></span><span class="i"><svg><use href="#e6"/></svg></span><span class="s"></span>
      <span class="i"><svg><use href="#e7"/></svg></span><span class="i"><svg><use href="#e8"/></svg></span><span class="i"><svg><use href="#e9"/></svg></span><span class="i"><svg><use href="#e10"/></svg></span><span class="i"><svg><use href="#e11"/></svg></span><span class="s s-n"></span>
      <span class="i"><svg><use href="#e12"/></svg></span><span class="i"><svg><use href="#e13"/></svg></span><span class="s s-n"></span>
      <span class="i"><svg><use href="#e14"/></svg></span>
    </div><span class="endgrip"></span>
  </div>

  <main class="main">
    <aside class="toc">
      <div class="toc-head"><span>Table Of Contents</span>
        <svg class="toc-pin" viewBox="0 0 10 12"><path d="M2.500 1h5v6h-5zM1 7.500h8M5 8v4M6 1v6" /></svg>
        <svg class="toc-x" viewBox="0 0 10 10"><path d="M1 1l8 8M9 1L1 9"/></svg>
      </div>
      <div class="toc-tools">
        <span class="i"><svg><use href="#tc1"/></svg></span><span class="i"><svg><use href="#tc2"/></svg></span><span class="i on"><svg><use href="#tc3"/></svg></span><span class="i"><svg><use href="#tc4"/></svg></span><span class="s"></span><span class="i"><svg><use href="#tc5"/></svg></span>
      </div>
      <div class="toc-body">
        <div class="toc-frame"><span class="minus"></span><span class="fname">Visible</span></div>
        <div class="toc-layer"><svg class="lyr"><use href="#lyr"/></svg><span class="lname">KPK_Boundary</span><svg class="chk"><use href="#chk"/></svg><svg class="upc"><use href="#upc"/></svg></div>
        <div class="toc-sym"><span class="sw sw-red"></span></div>
        <div class="toc-layer"><svg class="lyr"><use href="#lyr"/></svg><span class="lname">Pakistan_Districts</span><svg class="chk"><use href="#chk"/></svg><svg class="upc"><use href="#upc"/></svg></div>
        <div class="toc-sym"><span class="sw sw-green"></span></div>
      </div>
    </aside>

    <section class="center">
      <div class="map-row">
        <div class="map">
          <svg class="map-svg" viewBox="242 116 1635 871">
            <g class="jag"><g transform="translate(1100 150) scale(.33333)">
              <path class="land" d="M178 78L240 76 258 73 300 72 318 85 335 92 340 102 322 107 285 105 255 100 225 105 198 110 178 125Z"/>
              <path class="land" d="M178 255L205 255 220 255 225 265 210 272 212 280 240 288 258 310 318 310 325 322 308 335 312 358 330 362 355 372 382 380 372 415 350 432 312 440 302 465 298 477 265 477 258 510 272 530 276 568 288 590 290 625 296 655 290 685 302 710 305 725 325 745 350 742 385 765 435 785 442 795 470 790 482 775 473 810 478 835 515 838 525 848 540 836 565 850 590 860 598 880 578 905 545 912 522 910 500 928 480 932 455 955 465 985 472 1015 460 1035 455 1070 478 1080 475 1088 455 1090 440 1105 408 1135 388 1155 350 1190 340 1205 355 1230 320 1250 260 1275 240 1330 205 1395 178 1440Z"/>
              <path class="bnd" d="M205 415L260 418 268 435 285 405 335 400 360 385M205 462L228 440 265 440 285 412M205 530L250 515 258 510M205 575L215 590 230 605M205 612L255 628 225 662 205 650M205 735L255 730 262 708 300 708M225 735L218 790 232 795 205 798M205 825L290 797 325 820 340 850 395 825 440 810 442 790M290 797L300 770 325 745M205 870L232 885 238 900 305 865 340 852M305 865L330 920 345 950 395 945 425 940 455 910 480 925M395 828L410 880 450 900 460 912 490 880 500 850 525 845M238 900L215 955 240 965 205 985M240 965L265 990 270 1020 300 1015 310 1040 265 1070 262 1085 205 1125M215 955L285 940 315 935 312 965 335 990 300 990 310 1005 360 1000 365 1030 405 985 440 975 455 955M365 1040L400 1050 455 1035M300 1075L355 1045M300 1075L320 1105 375 1130 388 1155M238 1105L250 1135 250 1165 205 1185M250 1165L270 1160 295 1190 297 1218 325 1215 345 1205M205 1265L220 1250 260 1240 297 1218M262 1075L300 1075M215 1110L238 1105 300 1075"/>
              <path class="red" d="M178 78L195 78 240 76 258 73 300 72 318 85 335 92 340 102 322 107 285 105 255 100 225 105 198 110 193 120M205 255L220 255 225 265 210 272 212 280 240 288 258 310 318 310 325 322 308 335 312 358 330 362 355 372 382 380 372 415 350 432 312 440 302 465 298 477 265 477 258 510 272 530 276 568 250 580 238 600 205 612"/>
            </g></g>
            <g class="jag"><g transform="translate(490 720) scale(.3827 .33333)">
              <path class="land" d="M295 0L290 70 292 98 280 132 245 135 210 140 170 148 148 155 143 185 122 182 120 192 80 205 70 280 55 285 58 300 50 345 45 385 62 390 65 412 115 400 120 405 118 395 145 390 155 405 175 378 250 382 320 380 330 362 415 362 450 370 495 378 495 392 505 390 500 372 540 365 585 365 590 355 640 358 710 345 760 340 790 355 812 390 810 435 805 450 845 445 880 455 885 490 905 545 915 595 950 625 985 625 985 600 1015 630 1025 645 1030 615 1055 600 1118 598 1118 530 1135 545 1165 545 1250 545 1285 565 1315 560 1330 540 1390 520 1395 550 1425 555 1445 540 1475 520 1450 510 1468 475 1440 400 1420 365 1408 355 1405 295 1345 298 1320 255 1330 215 1332 150 1280 145 1232 120 1230 90 1248 0Z"/>
              <path class="lagoon" d="M720 335L735 318 770 320 785 312 790 345 760 335 720 342Z"/>
              <path class="bnd" d="M270 140L275 170 320 160 340 180 345 200 385 195 415 222 460 205 482 235 458 250 445 295 430 330 400 345M55 295L105 305 110 290 115 335 240 320 320 350 415 315 428 322M467 185L545 182 545 165 600 100 630 40M467 185L467 205M480 40L510 72 560 45 565 70 600 95M385 40L415 65 445 45M430 335L450 345 585 320 630 305 640 345 585 318 585 358M712 40L695 130 695 155 718 200 722 155 738 150 745 165 795 178 820 168 850 290 872 290 878 200 850 150 875 138 880 40M875 138L920 230 915 290 890 350 860 400 810 440M730 195L745 270 720 340M920 230L950 160 985 145 980 100 1000 70 1020 40M985 145L1050 140 1130 150 1135 175 1100 215 1075 210 1085 240 1040 250 985 205 990 160M1050 140L1070 60 1055 40M1135 170L1165 205 1320 215M910 310L918 355 895 390 930 420 940 455M930 425L965 415 995 350 1010 345 1055 370 1090 370M1040 250L1050 290 1065 325 1050 350 1058 390 1045 400 1050 450 1060 460 1115 435 1090 395 1150 375M1060 460L1070 525 1115 530M1075 240L1080 280 1105 300 1095 340 1110 295 1140 295 1150 380 1150 395 1200 425 1200 460 1165 525 1165 545M1140 295L1170 295 1185 340 1210 390 1225 445 1200 455 1265 390 1350 378 1350 340 1330 320 1345 295 1290 295 1250 330 1180 325M1095 340L1095 380"/>
              <path class="blob" d="M875 458L925 462 885 470 925 476 890 484 925 490 895 498 920 504 900 512 930 520 905 528 925 536 905 545 918 552 908 562 920 570 912 582 925 598 935 612"/>
              <path class="blob2" d="M905 470L895 490M915 462L905 500M900 510L915 540"/>
            </g></g>
          </svg>
        </div>
        <div class="vscroll">
          <svg class="sarrow" viewBox="0 0 12 8"><path d="M1 7l5-5 5 5"/></svg>
          <div class="vtrack"></div>
          <svg class="sarrow" viewBox="0 0 12 8"><path d="M1 1l5 5 5-5"/></svg>
        </div>
      </div>
      <div class="hscroll">
        <span class="vb vb-on"><svg viewBox="0 0 10 10"><path d="M.5.500h9v9h-9z" fill="#cfe3c8" stroke="#222"/><path d="M3 7l4-4" stroke="#3a8a4a" stroke-width="2"/></svg></span>
        <span class="vb"><svg viewBox="0 0 10 10"><path d="M1.500.5h5l2 2v7h-7z" fill="#fff" stroke="#222"/><path d="M3 5h4M3 7h4" stroke="#222"/></svg></span>
        <span class="vsep"></span>
        <svg class="vg" viewBox="0 0 12 12"><path d="M10 4a4.500 4.500 0 0 0-8 0M2 8a4.500 4.500 0 0 0 8 0M10 1v3H7M2 11V8h3"/></svg>
        <span class="pause"></span>
        <svg class="sarrow sa-h" viewBox="0 0 8 12"><path d="M7 1L2 6l5 5"/></svg>
        <div class="htrack"></div>
        <svg class="sarrow sa-h" viewBox="0 0 8 12"><path d="M1 1l5 5-5 5"/></svg>
      </div>
    </section>

    <aside class="rail">
      <div class="rail-x"><svg viewBox="0 0 10 10"><path d="M1 1l8 8M9 1L1 9"/></svg></div>
      <div class="rail-more">&gt;&gt;</div>
      <div class="rail-lo">Lo</div>
      <div class="rail-box"><span class="e-far">E</span><span>E</span><span>E</span></div>
    </aside>
  </main>

  <footer class="status"><span class="st-cell"></span><span class="coords">7983020.681&nbsp; 3010494.819 Meters</span></footer>

  <div class="taskbar">
    <span class="start"><svg><use href="#win"/></svg></span>
    <div class="search"><span class="cortana"></span><span class="s-text">Type here to search</span><svg class="mic"><use href="#mic"/></svg></div>
    <div class="apps">
      <span class="app-slot"><svg class="a-store"><use href="#store"/></svg></span>
      <span class="app-slot"><svg class="a-edge"><use href="#edge"/></svg></span>
      <span class="app-slot"><svg class="a-vlc"><use href="#vlc"/></svg></span>
      <span class="app-slot open"><svg class="a-exp"><use href="#exp"/></svg></span>
      <span class="app-slot open"><svg class="a-chr"><use href="#chr"/></svg></span>
      <span class="app-slot"><svg class="a-mail"><use href="#mail"/></svg></span>
      <span class="app-slot"><svg class="a-word"><use href="#word"/></svg></span>
      <span class="app-slot"><svg class="a-ie"><use href="#ie"/></svg></span>
      <span class="app-slot open active"><svg class="a-arc"><use href="#arc"/></svg></span>
      <span class="app-slot open"><svg class="a-py"><use href="#py"/></svg></span>
    </div>
    <div class="tray">
      <svg class="tr tr-caret" viewBox="0 0 16 10"><path d="M1 9l7-7 7 7"/></svg>
      <span class="tslot"><svg class="t-ic"><use href="#wifi"/></svg></span>
      <span class="tslot"><svg class="t-ic"><use href="#vol"/></svg></span>
      <span class="tslot"><svg class="t-bat"><use href="#bat"/></svg></span>
      <span class="tslot t-pen"><svg class="t-ic"><use href="#pen"/></svg></span>
      <div class="clock"><span>1:27 PM</span><span class="date">3/7/2021</span></div>
      <div class="notif"><svg viewBox="0 0 20 18"><path d="M0 0h20v14H8l-4 4v-4H0z" fill="#fff"/><path d="M4 4h12M4 7h12M4 10h8" stroke="#222"/></svg><span class="badge">5</span></div>
    </div>
  </div>

  <!-- floating windows -->
  <div class="win-back">
    <div class="wb-body">
      <div class="wb-content"></div>
      <div class="wb-v">
        <div class="wb-vtop"></div>
        <div class="wb-up"><svg class="sarrow" viewBox="0 0 12 8"><path d="M1 7l5-5 5 5"/></svg></div>
        <div class="wb-thumb"></div>
        <div class="wb-down"><svg class="sarrow" viewBox="0 0 12 8"><path d="M1 1l5 5 5-5"/></svg></div>
      </div>
    </div>
    <div class="wb-h">
      <svg class="sarrow sa-h" viewBox="0 0 8 12"><path d="M7 1L2 6l5 5"/></svg>
      <div class="wb-hthumb"></div>
      <svg class="sarrow sa-h" viewBox="0 0 8 12"><path d="M1 1l5 5-5 5"/></svg>
      <span class="sgrip"></span>
    </div>
  </div>

  <div class="dlg">
    <div class="dlg-title"><svg class="arc-small"><use href="#arc"/></svg><span>Save As</span>
      <svg class="dlg-x" viewBox="0 0 12 12"><path d="M.5.500l11 11M11.500.500l-11 11"/></svg>
    </div>
    <div class="dlg-top">
      <label class="savein">Save in:</label>
      <div class="sel sel-path"><svg class="fold"><use href="#fold"/></svg><span>LAB_ARCPY</span><svg class="chev" viewBox="0 0 10 6"><path d="M.5.500L5 5l4.500-4.500"/></svg></div>
      <div class="nav">
        <svg class="nv n1"><use href="#backb"/></svg><svg class="nv n2"><use href="#upb"/></svg><svg class="nv n2"><use href="#newb"/></svg><svg class="nv n3"><use href="#viewb"/></svg><span class="c c-nav"></span><svg class="nv n4"><use href="#home"/></svg>
      </div>
    </div>
    <div class="dlg-main">
      <div class="places">
        <div class="place"><svg class="p-star"><use href="#star"/></svg><span>Quick access</span></div>
        <div class="place"><svg class="p-desk"><use href="#desk"/></svg><span>Desktop</span></div>
        <div class="place"><svg class="p-libs"><use href="#libs"/></svg><span>Libraries</span></div>
        <div class="place"><svg class="p-pc"><use href="#pc"/></svg><span>This PC</span></div>
        <div class="place"><svg class="p-net"><use href="#net"/></svg><span>Network</span></div>
      </div>
      <div class="pane">
        <div class="list">
          <div class="col col-name">
            <div class="lh">Name<svg class="sort" viewBox="0 0 10 6"><path d="M.5 5.500L5 1l4.500 4.500"/></svg></div>
            <div class="lc"><svg class="fold"><use href="#fold"/></svg>KPK_Boundary</div>
            <div class="lc"><svg class="fold"><use href="#fold"/></svg>Output</div>
            <div class="lc"><svg class="fold"><use href="#fold"/></svg>Pakistan_Districts</div>
          </div>
          <div class="col col-date">
            <div class="lh">Date modified</div>
            <div class="lc">3/7/2021 1:10 PM</div>
            <div class="lc">3/7/2021 1:22 PM</div>
            <div class="lc">3/7/2021 1:23 PM</div>
          </div>
          <div class="col col-type">
            <div class="lh">Type</div>
            <div class="lc">File folder</div>
            <div class="lc">File folder</div>
            <div class="lc">File folder</div>
          </div>
        </div>
        <div class="lscroll">
          <svg class="sarrow sa-h" viewBox="0 0 8 12"><path d="M7 1L2 6l5 5"/></svg>
          <div class="lthumb"></div>
          <svg class="sarrow sa-h" viewBox="0 0 8 12"><path d="M1 1l5 5-5 5"/></svg>
        </div>
        <div class="form">
          <label class="flabel">File name:</label>
          <div class="sel sel-file"><span class="picked">arcpy_clip.py</span><svg class="chev" viewBox="0 0 10 6"><path d="M.5.500L5 5l4.500-4.500"/></svg></div>
          <button class="btn btn-def">Save</button>
          <label class="flabel">Save as type:</label>
          <div class="sel sel-type"><span>Python Scripts</span><svg class="chev" viewBox="0 0 10 6"><path d="M.5.500L5 5l4.500-4.500"/></svg></div>
          <button class="btn">Cancel</button>
        </div>
      </div>
    </div>
    <span class="sgrip dlg-grip"></span>
  </div>

  <div class="float">
    <svg class="fl-model"><use href="#model"/></svg>
    <svg class="fl-g fl-rest" viewBox="0 0 14 14"><path d="M.5 3.500h10v10H.5zM3.500 3.500v-3h10v10h-3"/></svg>
    <svg class="fl-g fl-max" viewBox="0 0 14 14"><path d="M.5.500h13v13H.5z"/></svg>
    <svg class="fl-g fl-x" viewBox="0 0 14 14"><path d="M.5.500l13 13M13.500.500l-13 13"/></svg>
  </div>
</div>
</body>
</html>
```

FILE: styles.css
```css
* { box-sizing: border-box; }
html, body { margin: 0; padding: 0; }
body { width: 1919px; height: 1079px; overflow: hidden; background: #fff; font-family: "Noto Sans", "Liberation Sans", sans-serif; color: #111; }
.defs { position: absolute; width: 0; height: 0; }
.app { position: relative; width: 1919px; height: 1079px; display: flex; flex-direction: column; overflow: hidden; }

/* title */
.titlebar { height: 29px; display: flex; align-items: center; padding-left: 2px; background: #fff; flex: none; }
.arc-small { width: 21px; height: 21px; flex: none; }
.title-text { margin-left: 4px; margin-top: -2px; font-size: 14.500px; color: #8c8c8c; }
.winbtns { margin-left: auto; display: flex; margin-top: -2px; }
.wb { width: 12px; height: 12px; margin: 0 23px 0 24px; fill: none; stroke: #777; }
.winbtns .wb:last-child { margin-right: 24px; }

/* menu */
.menubar { height: 27px; flex: none; background: #f5f5f5; display: flex; align-items: center; padding-left: 4px; font-family: Roboto, "Noto Sans", sans-serif; font-size: 11.600px; color: #111; }
.mi { padding: 0 8px; }
.expand { width: 17px; height: 17px; margin-left: 5px; fill: none; stroke: #bdbdbd; stroke-width: 1.400; }

/* toolbars */
.tbrow { height: 27px; flex: none; background: #f5f5f5; display: flex; padding-left: 3px; }
.r2 { height: 32px; }
.tb { display: flex; align-items: center; background: #fbfbfb; height: 27px; }
.r2 .tb { height: 31px; }
.t-a { width: 606px; }
.t-b { margin-left: 16px; width: 374px; }
.t-c { width: 514px; }
.t-d { margin-left: 18px; width: 273px; }
.t-e { margin-left: 25px; width: 405px; }
.grip { width: 8px; height: 18px; flex: none; background: repeating-linear-gradient(#aaa 0 1px, transparent 1px 3px) 2px 0/2px 100% no-repeat; }
.g-n { width: 6px; }
.endgrip { width: 10px; height: 100%; flex: none; background: linear-gradient(#f3f3f3, #c4c4c4); position: relative; }
.endgrip::after { content: ""; position: absolute; left: 2px; bottom: 7px; width: 6px; height: 1px; background: #111; }
.endgrip::before { content: ""; position: absolute; left: 2px; bottom: 2px; border: 3px solid transparent; border-bottom: 0; border-top: 4px solid #111; }
.i { width: 22px; height: 23px; flex: none; display: flex; align-items: center; justify-content: center; }
.i svg { width: 18px; height: 18px; }
.i-n { width: 20px; }
.i-w { width: 24px; }
.on { background: #dcebf8; border: 1px solid #4a9bd8; }
.s { width: 6px; height: 22px; flex: none; background: linear-gradient(#bbb, #bbb) center/1px 100% no-repeat; }
.s-n { width: 5px; }
.s-7 { width: 7px; }
.s-9 { width: 9px; }
.c { width: 9px; height: 12px; flex: none; position: relative; }
.c-10 { width: 10px; }
.c-11 { width: 11px; }
.c::after { content: ""; position: absolute; left: 1px; top: 4px; border: 3px solid transparent; border-top: 4px solid #111; border-bottom: 0; }
.c-dim::after { border-top-color: #bbb; }
.combo { position: relative; height: 23px; flex: none; display: flex; align-items: center; background: #fff; border: 1px solid #8a8a8a; font-size: 12px; padding-left: 3px; }
.chev { width: 10px; height: 6px; fill: none; stroke: #555; margin-left: auto; margin-right: 6px; flex: none; }
.chev.dim { stroke: #aaa; }
.c-scale { width: 148px; margin: 0 6px 0 7px; font-size: 12px; }
.c-zoom { width: 59px; border-color: #c8c8c8; margin-left: 1px; font-size: 14px; }
.sel-dim { background: #0066cc; color: #3f74b4; padding-right: 1px; }
.c-fast { width: 68px; height: 28px; background: #c8c8c8; border-color: #bdbdbd; color: #77787c; font-size: 14px; padding-left: 4px; }
.tb-text { font-family: Roboto, "Noto Sans", sans-serif; font-size: 11.300px; margin-left: 3px; }
.tb-text + .c { margin-right: 4px; }

/* main */
.main { flex: 1; min-height: 0; display: flex; background: #f0f0f0; }
.toc { width: 236px; flex: none; display: flex; flex-direction: column; background: #fff; }
.toc-head { height: 20px; flex: none; background: linear-gradient(#d3dfea, #cbd8e6); display: flex; align-items: center; padding-left: 4px; font-family: Roboto, "Noto Sans", sans-serif; font-size: 11.900px; position: relative; }
.toc-pin { width: 9px; height: 11px; margin-left: auto; fill: none; stroke: #111; }
.toc-x { width: 9px; height: 9px; margin: 0 4px 0 9px; fill: none; stroke: #000; stroke-width: 1.500; }
.toc-tools { height: 27px; flex: none; display: flex; align-items: center; padding-left: 4px; background: #fbfbfb; }
.toc-body { flex: 1; border-left: 1px solid #999; font-size: 13.700px; background: #fff; }
.toc-frame { height: 30px; background: #b9d7f7; border-top: 1px solid #8fb3dd; border-bottom: 2px solid #7ea6d8; margin-left: -1px; display: flex; align-items: center; padding-left: 4px; }
.fname { font-size: 15px; }
.minus { width: 11px; height: 11px; border: 1px solid #778; margin-right: 7px; margin-top: 2px; background: linear-gradient(#445, #445) center/5px 1px no-repeat, #dce9f8; flex: none; }
.toc-layer { height: 24px; display: flex; align-items: center; padding-left: 1px; margin-top: -1px; margin-bottom: 1px; }
.lyr { width: 17px; height: 17px; flex: none; }
.lname { margin-left: 2px; }
.chk { width: 11px; height: 11px; margin-left: auto; }
.upc { width: 10px; height: 12px; margin: 0 4px 0 8px; }
.toc-sym { height: 24px; display: flex; align-items: center; padding-left: 17px; }
.sw { width: 15px; height: 13px; display: block; }
.sw-red { border: 2px solid #e60000; background: #fff; }
.sw-green { background: #b7f5d1; border: 1px solid #b0b0b0; }

.center { margin-left: 5px; width: 1656px; display: flex; flex-direction: column; flex: none; }
.map-row { flex: 1; min-height: 0; display: flex; background: #fff; border-top: 1px solid #666; }
.map { width: 1636px; flex: none; background: #fff; border-left: 1px solid #666; border-bottom: 1px solid #ddd; position: relative; overflow: hidden; }
.map-svg { position: absolute; left: 0; top: 0; width: 1635px; height: 871px; display: block; }
.jag { filter: url(#jag); }
.land { fill: #b7f5d1; stroke: #6e6e6e; stroke-width: 1; vector-effect: non-scaling-stroke; }
.bnd { fill: none; stroke: #6e6e6e; stroke-width: 1; vector-effect: non-scaling-stroke; }
.red { fill: none; stroke: #e60000; stroke-width: 2.800; vector-effect: non-scaling-stroke; }
.lagoon { fill: #fff; stroke: #6e6e6e; vector-effect: non-scaling-stroke; }
.blob { fill: none; stroke: #6e6e6e; stroke-width: 2; stroke-dasharray: 3 1; vector-effect: non-scaling-stroke; }
.blob2 { fill: none; stroke: #6e6e6e; stroke-width: 3; vector-effect: non-scaling-stroke; }
.vscroll { width: 19px; flex: none; display: flex; flex-direction: column; align-items: center; background: #f0f0f0; }
.vtrack { flex: 1; width: 100%; background: #ccc; }
.sarrow { width: 12px; height: 8px; margin: 6px 0; flex: none; fill: none; stroke: #606060; stroke-width: 2; }
.sa-h { width: 8px; height: 12px; margin: 0; }
.hscroll { height: 20px; flex: none; display: flex; align-items: center; background: #f0f0f0; border-top: 1px solid #fff; padding-left: 2px; }
.vb { width: 16px; height: 16px; flex: none; border: 1px solid transparent; display: flex; align-items: center; justify-content: center; }
.vb svg { width: 10px; height: 10px; }
.vb-on { background: #cfe4f7; border-color: #8fc0e8; }
.vsep { width: 1px; height: 16px; background: #999; margin: 0 7px 0 3px; flex: none; }
.vg { width: 12px; height: 12px; fill: none; stroke: #1f5aa6; stroke-width: 1.300; flex: none; }
.pause { width: 7px; height: 9px; margin: 0 9px 0 7px; flex: none; border-left: 3px solid #1f5aa6; border-right: 3px solid #1f5aa6; }
.htrack { margin: 0 7px 0 4px; width: 1522px; height: 19px; background: #ccc; flex: none; }
.rail { flex: 1; margin-left: 5px; display: flex; flex-direction: column; background: #f0f0f0; position: relative; }
.rail-x { height: 20px; background: #cfdbe8; display: flex; align-items: center; justify-content: center; flex: none; }
.rail-x svg { width: 9px; height: 9px; fill: none; stroke: #000; stroke-width: 1.600; }
.rail-more { height: 23px; background: #fff; color: #8a84b8; font-size: 10px; font-weight: 700; padding-left: 5px; flex: none; white-space: nowrap; }
.rail-lo { height: 40px; padding: 14px 0 0 2px; font-size: 13px; flex: none; white-space: nowrap; }
.rail-box { flex: 1; margin: 0 2px 0 1px; border: 1px solid #aaa; border-top-width: 2px; border-left-width: 2px; border-right-color: #ddd; background: #fff; display: flex; flex-direction: column; align-items: center; justify-content: flex-end; gap: 9px; color: #999; font-size: 9px; padding-bottom: 50px; }
.e-far { margin-bottom: 42px; }
.status { height: 23px; flex: none; background: #f0f0f0; border-top: 1px solid #e4e4e4; display: flex; align-items: center; font-size: 12px; padding-top: 1px; }
.st-cell { width: 1667px; flex: none; }
.coords { color: #111; white-space: nowrap; font-family: Roboto, "Noto Sans", sans-serif; font-size: 11px; }

/* taskbar */
.taskbar { height: 49px; flex: none; background: #0a0a0a; display: flex; align-items: stretch; }
.start { width: 60px; flex: none; display: flex; align-items: center; justify-content: center; }
.start svg { width: 20px; height: 20px; }
.search { width: 430px; flex: none; background: #f0f0f0; border-top: 1px solid #c8c8c8; display: flex; align-items: center; padding-left: 12px; }
.cortana { width: 26px; height: 26px; border: 3px solid #111; border-radius: 50%; flex: none; }
.s-text { margin-left: 12px; font-size: 16.500px; color: #333; white-space: nowrap; }
.mic { width: 16px; height: 24px; margin-left: auto; margin-right: 18px; }
.apps { display: flex; margin-left: 3px; }
.app-slot { width: 62px; display: flex; align-items: center; justify-content: center; position: relative; flex: none; }
.app-slot svg { width: 30px; height: 34px; }
.app-slot .a-exp { width: 28px; height: 29px; }
.app-slot.open::after { content: ""; position: absolute; left: 5px; right: 6px; bottom: 0; height: 2px; background: #76b9ed; }
.app-slot.active { background: #3a3a3a; border-right: 4px solid #333; }
.app-slot.active::after { left: 0; right: 0; }
.tray { margin-left: auto; width: 309px; flex: none; display: flex; align-items: center; color: #fff; }
.tr-caret { width: 16px; height: 10px; margin: 0 7px; fill: none; stroke: #eee; stroke-width: 1.300; flex: none; }
.tslot { width: 30px; flex: none; display: flex; justify-content: center; }
.t-ic { width: 22px; height: 22px; }
.t-bat { width: 24px; height: 16px; }
.t-pen { width: 40px; }
.clock { width: 85px; flex: none; display: flex; flex-direction: column; align-items: center; font-size: 14px; line-height: 24px; color: #eee; padding-top: 2px; }
.date { font-size: 15px; }
.notif { width: 50px; flex: none; position: relative; display: flex; justify-content: center; }
.notif svg { width: 20px; height: 18px; margin-top: -9px; }
.badge { position: absolute; left: 24px; top: 7px; width: 20px; height: 20px; border-radius: 50%; background: #3a3a3a; border: 1px solid #777; color: #fff; font-size: 12px; font-weight: 700; display: flex; align-items: center; justify-content: center; }

/* back window */
.win-back { position: absolute; left: 453px; top: 190px; width: 715px; height: 543px; background: #fff; border: 1px solid #666; box-shadow: 0 3px 14px rgba(0,0,0,.4); display: flex; flex-direction: column; }
.wb-body { flex: 1; min-height: 0; display: flex; }
.wb-content { flex: 1; background: #fff; }
.wb-v { width: 20px; flex: none; display: flex; flex-direction: column; background: #f0f0f0; }
.wb-vtop { height: 89px; flex: none; border-bottom: 1px solid #666; }
.wb-up { height: 21px; flex: none; display: flex; justify-content: center; }
.wb-thumb { flex: 1; background: #ccc; }
.wb-down { height: 21px; background: #f0f0f0; display: flex; justify-content: center; flex: none; }
.wb-h { height: 20px; flex: none; display: flex; align-items: center; background: #f0f0f0; padding-left: 7px; position: relative; }
.wb-hthumb { width: 650px; height: 19px; background: #ccc; margin: 0 6px; flex: none; }
.sgrip { width: 10px; height: 10px; background: radial-gradient(circle, #b0b0b0 1px, transparent 1.200px) 0 0/3.400px 3.400px; clip-path: polygon(100% 0, 100% 100%, 0 100%); }
.wb-h .sgrip { margin-left: auto; margin-right: 3px; }

/* dialog */
.dlg { position: absolute; left: 418px; top: 148px; width: 742px; height: 513px; background: #f0f0f0; border: 1px solid #666; box-shadow: 0 3px 16px rgba(0,0,0,.42); display: flex; flex-direction: column; font-size: 13px; }
.dlg-title { height: 37px; flex: none; background: #fff; display: flex; align-items: center; padding-left: 9px; font-size: 14px; }
.dlg-title span { margin-left: 4px; }
.dlg-x { width: 12px; height: 12px; margin-left: auto; margin-right: 15px; fill: none; stroke: #111; }
.dlg-top { height: 43px; flex: none; display: flex; align-items: flex-start; padding-top: 8px; }
.savein { width: 122px; text-align: right; padding-top: 3px; font-size: 13px; flex: none; }
.sel { display: flex; align-items: center; background: #fff; flex: none; }
.sel .chev { margin-right: 5px; }
.sel-path { width: 348px; height: 25px; margin-left: 10px; border: 1px solid #7a7a7a; padding-left: 8px; font-size: 14px; }
.fold { width: 14px; height: 16px; flex: none; }
.sel-path span { margin-left: 7px; }
.nav { margin-left: 19px; display: flex; align-items: center; height: 22px; }
.nv { width: 16px; height: 16px; flex: none; }
.n2 { margin-left: 7px; }
.n3 { margin-left: 8px; }
.c-nav { margin-left: 1px; }
.n4 { margin-left: 15px; }
.dlg-main { flex: 1; min-height: 0; display: flex; padding-left: 8px; }
.places { width: 116px; height: 416px; flex: none; background: #f5f5f5; display: flex; flex-direction: column; padding-top: 8px; font-size: 14px; }
.place { height: 73px; flex: none; display: flex; flex-direction: column; align-items: center; justify-content: flex-end; padding-bottom: 13px; }
.place svg { flex: none; }
.p-star { width: 36px; height: 30px; margin-bottom: 6px; }
.p-desk { width: 36px; height: 26px; margin-bottom: 8px; }
.p-libs { width: 36px; height: 30px; margin-bottom: 7px; }
.p-pc { width: 37px; height: 34px; margin-bottom: 5px; }
.p-net { width: 36px; height: 35px; margin-bottom: 5px; }
.pane { width: 600px; margin-left: 8px; flex: none; display: flex; flex-direction: column; }
.list { height: 328px; flex: none; background: #fff; display: flex; font-size: 14px; }
.col { flex: none; display: flex; flex-direction: column; background: #fff; }
.col + .col { border-left: 1px solid #e8f0fa; }
.col-name { width: 339px; font-size: 13.600px; }
.col-date { width: 150px; }
.col-type { flex: 1; }
.lh { height: 26px; padding: 4px 0 0 6px; position: relative; flex: none; font-size: 14px; }
.col + .col .lh { box-shadow: -1px 0 0 #e2e2e2; }
.col-type .lh { padding-left: 5px; }
.sort { position: absolute; left: 165px; top: 0; width: 10px; height: 6px; fill: none; stroke: #888; }
.lc { height: 24px; flex: none; display: flex; align-items: center; padding-left: 6px; white-space: nowrap; position: relative; top: 1px; }
.col-type .lc { padding-left: 5px; }
.col-name .lc { padding-left: 1px; }
.col-name .lc .fold { margin-left: 9px; margin-right: 6px; }
.lscroll { height: 19px; flex: none; display: flex; align-items: center; padding-left: 7px; }
.lthumb { width: 452px; height: 19px; background: #ccc; margin: 0 112px 0 6px; flex: none; }
.form { margin-top: 14px; display: grid; grid-template-columns: 128px 328px 45px 98px; grid-template-rows: 26px 26px; row-gap: 7px; align-items: center; font-size: 12.700px; }
.flabel { padding-left: 2px; word-spacing: 1.500px; }
.sel-file { grid-column: 2; height: 25px; align-self: start; border: 1px solid #0078d7; padding-left: 3px; }
.picked { background: #0078d7; color: #fff; border-right: 1px solid #e26c1a; }
.sel-type { grid-column: 2; height: 24px; background: #e1e1e1; border: 1px solid #adadad; padding-left: 3px; align-self: start; margin-top: 1px; }
.btn { grid-column: 4; height: 26px; width: 98px; font: inherit; background: #e1e1e1; border: 1px solid #adadad; color: #111; padding: 0; }
.btn-def { border: 2px solid #0078d7; }
.dlg-grip { position: absolute; right: 2px; bottom: 2px; }

/* floating mini window */
.float { position: absolute; left: 9px; top: 997px; width: 181px; height: 24px; background: #fff; border: 1px solid #a0a0a0; box-shadow: 0 2px 8px rgba(0,0,0,.35); display: flex; align-items: center; }
.fl-model { width: 20px; height: 26px; margin: 10px 0 0 8px; flex: none; }
.fl-g { width: 12px; height: 12px; fill: none; stroke: #8c8c8c; flex: none; }
.fl-rest { margin-left: 0; margin-top: -1px; }
.fl-max { margin-left: 45px; }
.fl-x { margin-left: 47px; }
```
